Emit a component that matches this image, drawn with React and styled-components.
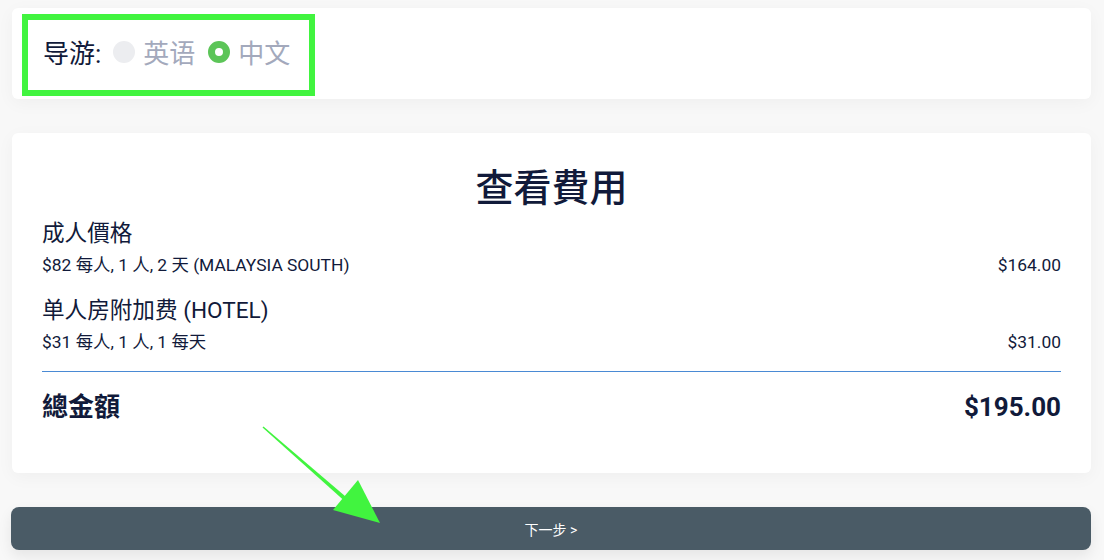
import React from 'react';
import styled, { createGlobalStyle } from 'styled-components';

const GlobalStyle = createGlobalStyle`
  html, body {
    margin: 0;
    padding: 0;
    background: #f8f8f8;
  }
  body {
    font-family: Roboto, "Noto Sans CJK SC", sans-serif;
    color: #111a3a;
  }
`;

const Page = styled.div`
  position: relative;
  min-height: 100vh;
  box-sizing: border-box;
  padding: 8px 13px 0 12px;
`;

const Card = styled.div`
  position: relative;
  background: #fff;
  border-radius: 6px;
  box-shadow: 0 4px 18px rgba(0, 0, 0, 0.04);
  box-sizing: border-box;
`;

const GuideCard = styled(Card)`
  height: 91px;
  padding: 0 31px 4px;
  display: flex;
  align-items: center;
  margin-bottom: 34px;
`;

const GuideLabel = styled.span`
  font-size: 26px;
  color: #111a3a;
  margin-right: 12px;
`;

const Option = styled.label`
  display: flex;
  align-items: center;
  gap: 8px;
  margin-right: 13px;
  font-size: 26px;
  color: #a3a9bc;
`;

const Radio = styled.span`
  width: 22px;
  height: 22px;
  border-radius: 50%;
  box-sizing: border-box;
  background: ${p => (p.checked ? '#fff' : '#ecedf0')};
  border: ${p => (p.checked ? '7px solid #5cc558' : 'none')};
`;

const Highlight = styled.div`
  position: absolute;
  left: 10px;
  top: 6px;
  width: 293px;
  height: 82px;
  box-sizing: border-box;
  border: 6px solid #41f43f;
  pointer-events: none;
`;

const CostCard = styled(Card)`
  padding: 32px 30px 49px;
  margin-bottom: 34px;
`;

const Title = styled.h2`
  margin: 0 0 8px;
  text-align: center;
  font-size: 38px;
  line-height: 46px;
  font-weight: 500;
`;

const Item = styled.div`
  & + & {
    margin-top: 19px;
  }
`;

const ItemName = styled.div`
  font-size: 22.6px;
  line-height: 30px;
  margin-bottom: 4px;
`;

const ItemRow = styled.div`
  display: flex;
  justify-content: space-between;
  font-size: 17.4px;
  line-height: 24px;
`;

const Divider = styled.hr`
  border: none;
  border-top: 1px solid #4a8ad4;
  margin: 17px 0 18px;
`;

const TotalRow = styled.div`
  display: flex;
  justify-content: space-between;
  font-size: 26px;
  line-height: 34px;
  font-weight: 700;
`;

const NextButton = styled.button`
  display: block;
  width: calc(100% + 1px);
  margin-left: -1px;
  height: 43px;
  border: none;
  border-radius: 8px;
  background: #4a5b66;
  color: #fff;
  font-family: Roboto, "Noto Sans CJK SC", sans-serif;
  font-size: 14px;
  box-shadow: 0 6px 14px rgba(0, 0, 0, 0.08);
`;

const ArrowSvg = styled.svg`
  position: absolute;
  left: 250px;
  top: 420px;
  pointer-events: none;
`;

const items = [
  { name: '成人價格', detail: '$82 每人, 1 人, 2 天 (MALAYSIA SOUTH)', price: '$164.00' },
  { name: '单人房附加费 (HOTEL)', detail: '$31 每人, 1 人, 1 每天', price: '$31.00' },
];

const Arrow = () => (
  <ArrowSvg width="140" height="110" viewBox="250 420 140 110">
    <polygon points="262.5,427.5 263.5,426.5 352,502 349,505" fill="#41f43f" />
    <polygon points="358,480 333,510 380,523" fill="#41f43f" />
  </ArrowSvg>
);

export default function App() {
  return (
    <Page>
      <GlobalStyle />
      <GuideCard>
        <GuideLabel>导游:</GuideLabel>
        <Option>
          <Radio />
          英语
        </Option>
        <Option>
          <Radio checked />
          中文
        </Option>
        <Highlight />
      </GuideCard>

      <CostCard>
        <Title>查看費用</Title>
        {items.map(it => (
          <Item key={it.name}>
            <ItemName>{it.name}</ItemName>
            <ItemRow>
              <span>{it.detail}</span>
              <span>{it.price}</span>
            </ItemRow>
          </Item>
        ))}
        <Divider />
        <TotalRow>
          <span>總金額</span>
          <span>$195.00</span>
        </TotalRow>
      </CostCard>

      <NextButton>下一步 &gt;</NextButton>
      <Arrow />
    </Page>
  );
}
